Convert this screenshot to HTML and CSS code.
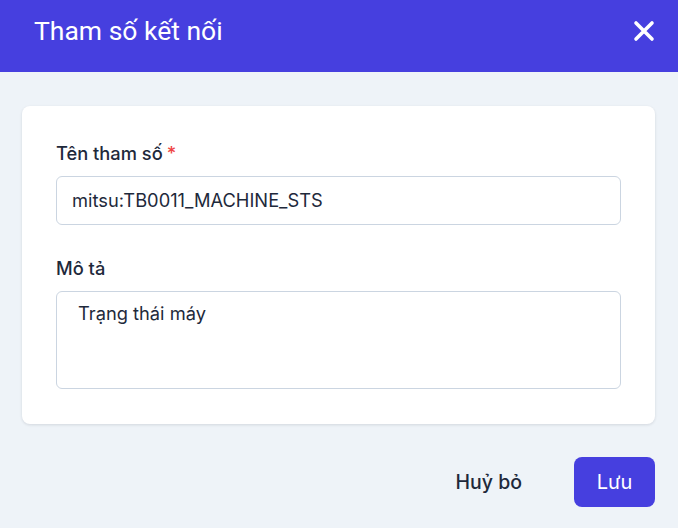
FILE: index.html
```html
<!DOCTYPE html>
<html lang="vi">
<head>
<meta charset="utf-8">
<link rel="stylesheet" href="styles.css">
</head>
<body>
<div class="dialog">
  <header class="header">
    <h1 class="title">Tham số kết nối</h1>
    <button class="close" aria-label="Đóng">
      <svg width="22" height="22" viewBox="0 0 22 22"><path d="M3 3L19 19M19 3L3 19" stroke="#fff" stroke-width="3.6" stroke-linecap="round"/></svg>
    </button>
  </header>
  <main class="body">
    <section class="card">
      <div class="field">
        <label class="label">Tên tham số<span class="req">*</span></label>
        <div class="input">mitsu:TB0011_MACHINE_STS</div>
      </div>
      <div class="field">
        <label class="label">Mô tả</label>
        <div class="textarea">Trạng thái máy</div>
      </div>
    </section>
    <footer class="footer">
      <button class="btn-cancel">Huỷ bỏ</button>
      <button class="btn-save">Lưu</button>
    </footer>
  </main>
</div>
</body>
</html>
```

FILE: styles.css
```css
* { box-sizing: border-box; }
html, body { margin: 0; padding: 0; }
body {
  width: 678px;
  height: 528px;
  background: #eef3f8;
  font-family: Inter, "Noto Sans", sans-serif;
  color: #1e293b;
  overflow: hidden;
}
.dialog { display: flex; flex-direction: column; height: 528px; }
.header {
  height: 72px;
  background: #463fdf;
  display: flex;
  justify-content: space-between;
  align-items: flex-start;
  padding: 14px 22px 0 34px;
}
.title {
  margin: 0;
  font-family: Roboto, "Noto Sans", sans-serif;
  font-weight: 400;
  font-size: 26.5px;
  line-height: 34px;
  color: #fff;
}
.close {
  background: none;
  border: 0;
  padding: 0;
  margin-top: 5px;
  width: 24px;
  height: 24px;
  display: flex;
  align-items: center;
  justify-content: center;
}
.body { padding: 34px 23px 0 22px; }
.card {
  background: #fff;
  border-radius: 8px;
  box-shadow: 0 1px 3px rgba(15, 23, 42, 0.12);
  padding: 35px 34px 35px 34px;
  display: flex;
  flex-direction: column;
  gap: 31px;
}
.field { display: flex; flex-direction: column; gap: 11px; }
.label {
  font-size: 18.3px;
  line-height: 24px;
  font-weight: 500;
  color: #1e293b;
}
.req { color: #ef4444; margin-left: 4px; }
.input {
  height: 49px;
  border: 1px solid #cbd5e1;
  border-radius: 6px;
  padding: 0 15px;
  font-size: 18.3px;
  line-height: 47px;
  color: #1e293b;
}
.textarea {
  height: 98px;
  border: 1px solid #cbd5e1;
  border-radius: 6px;
  padding: 9px 21px;
  font-size: 18.3px;
  line-height: 24px;
  color: #1e293b;
}
.footer {
  display: flex;
  justify-content: flex-end;
  align-items: center;
  gap: 17px;
  padding-top: 33px;
}
.btn-cancel {
  background: none;
  border: 0;
  font-family: Inter, "Noto Sans", sans-serif;
  font-size: 19.5px;
  font-weight: 500;
  color: #1e293b;
  padding: 0 35px;
  height: 50px;
}
.btn-save {
  background: #463fdf;
  border: 0;
  border-radius: 8px;
  width: 81px;
  height: 50px;
  font-family: Inter, "Noto Sans", sans-serif;
  font-size: 20px;
  font-weight: 400;
  color: #fff;
}
```
